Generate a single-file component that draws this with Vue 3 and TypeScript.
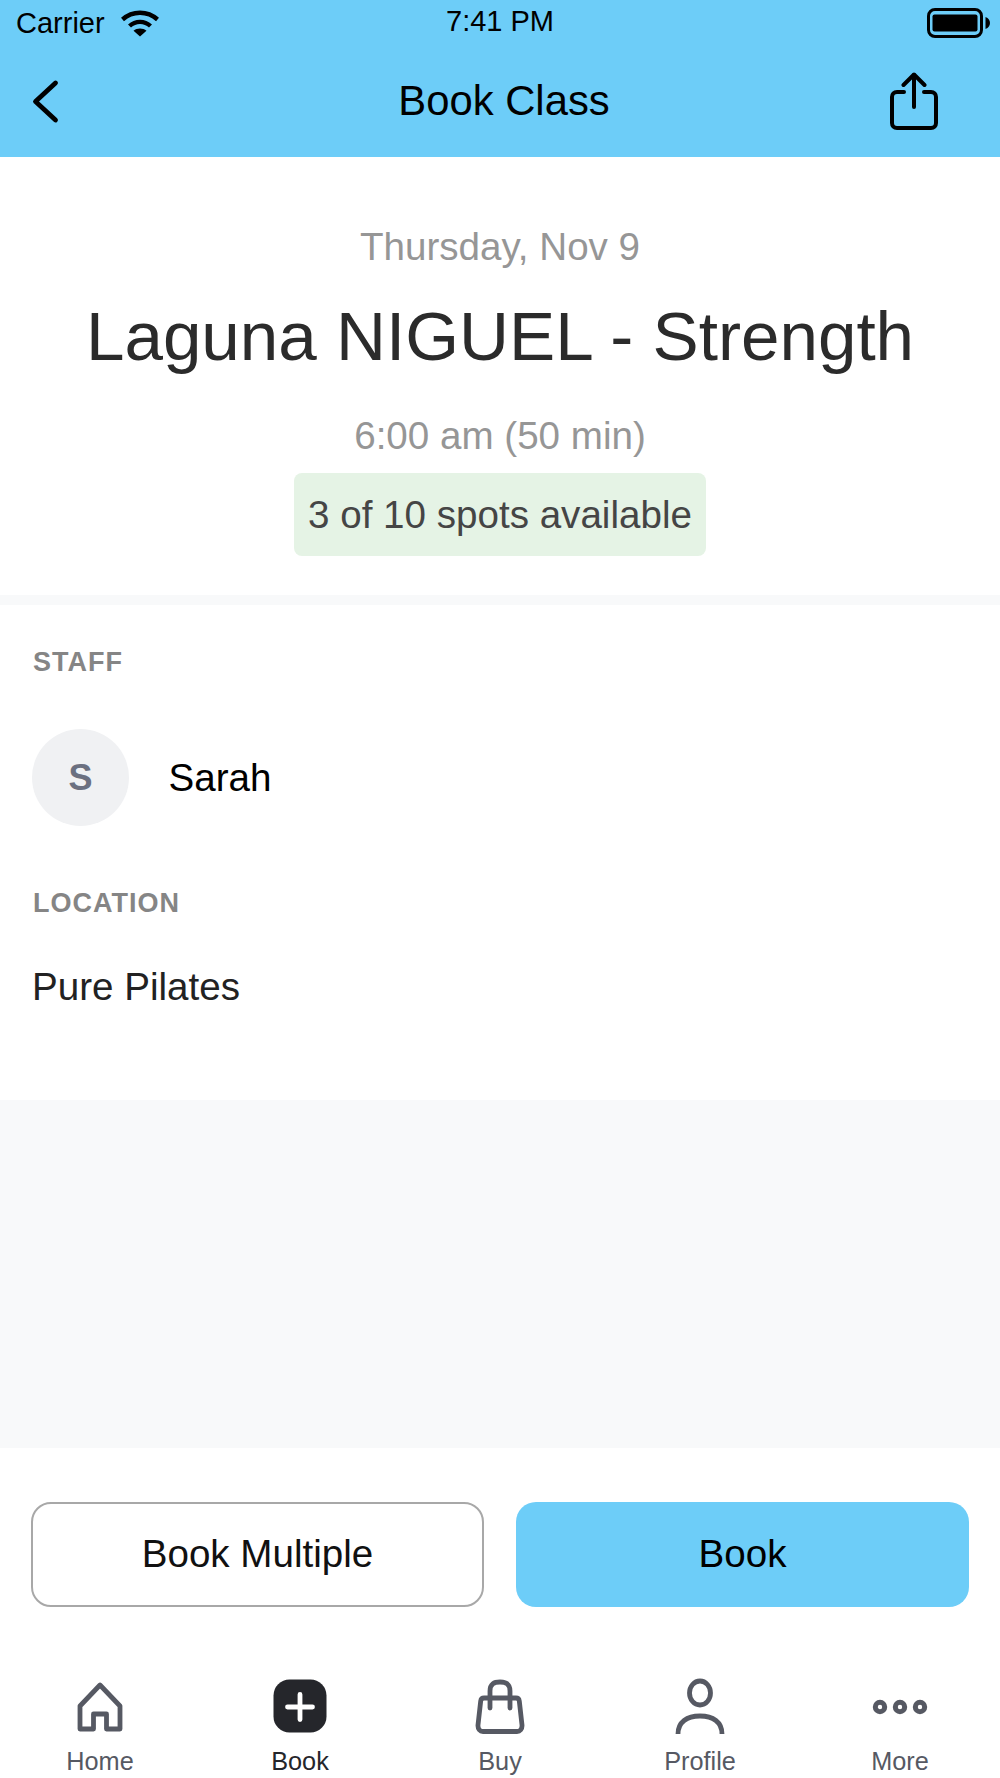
<script setup lang="ts">
const tabs = [
  { label: 'Home', icon: 'home' },
  { label: 'Book', icon: 'book', active: true },
  { label: 'Buy', icon: 'buy' },
  { label: 'Profile', icon: 'profile' },
  { label: 'More', icon: 'more' },
]
</script>

<template>
  <div class="screen">
    <header class="top">
      <div class="status">
        <div class="status-left">
          <span class="carrier">Carrier</span>
          <svg class="wifi" width="40" height="28" viewBox="0 0 40 28" fill="none" stroke="#000" stroke-width="4.4">
            <path d="M2.5 10.5C12.5 1.5 27.5 1.5 37.5 10.5" />
            <path d="M9.5 17C15.5 11.5 24.5 11.5 30.5 17" />
            <path d="M20 27.5L13.5 21.8C17 18.8 23 18.8 26.5 21.8Z" fill="#000" stroke="none" />
          </svg>
        </div>
        <span class="clock">7:41 PM</span>
        <svg class="battery" width="63" height="32" viewBox="0 0 63 32">
          <rect x="1.5" y="2.500" width="53" height="27" rx="6.500" fill="none" stroke="#000" stroke-width="3" />
          <rect x="5.500" y="7.500" width="45" height="17" rx="2" fill="#000" />
          <path d="M58.500 10C61.500 11 63 13.500 63 16C63 18.500 61.500 21 58.500 22Z" fill="#000" />
        </svg>
      </div>
      <div class="navbar">
        <svg class="back" width="32" height="48" viewBox="0 0 32 48" fill="none" stroke="#000" stroke-width="4.800" stroke-linecap="round" stroke-linejoin="round">
          <path d="M25.500 5L5.500 23.500L25.500 42" />
        </svg>
        <h1 class="nav-title">Book Class</h1>
        <svg class="share" width="50" height="60" viewBox="0 0 50 60" fill="none" stroke="#000" stroke-width="4" stroke-linecap="round" stroke-linejoin="round">
          <path d="M15 20H8C5 20 3 22 3 25V51C3 54 5 56 8 56H42C45 56 47 54 47 51V25C47 22 45 20 42 20H35" />
          <path d="M25 35V3" />
          <path d="M14.500 13L25 2.500L35.500 13" />
        </svg>
      </div>
    </header>

    <section class="summary">
      <p class="date">Thursday, Nov 9</p>
      <h2 class="class-name">Laguna NIGUEL - Strength</h2>
      <p class="time">6:00 am (50 min)</p>
      <span class="spots">3 of 10 spots available</span>
    </section>

    <section class="details">
      <h3 class="label">STAFF</h3>
      <div class="staff">
        <div class="avatar">S</div>
        <span class="staff-name">Sarah</span>
      </div>
      <h3 class="label location-label">LOCATION</h3>
      <p class="location">Pure Pilates</p>
    </section>

    <div class="spacer"></div>

    <div class="actions">
      <button class="btn outline">Book Multiple</button>
      <button class="btn primary">Book</button>
    </div>

    <nav class="tabs">
      <div v-for="tab in tabs" :key="tab.label" class="tab" :class="{ active: tab.active }">
        <svg class="tab-icon" width="56" height="56" viewBox="0 0 56 56" fill="none" stroke="#565963" stroke-width="4.800" stroke-linecap="round" stroke-linejoin="round">
          <template v-if="tab.icon === 'home'">
            <path d="M28 7L8 28V51H21.500V36H34.500V51H48V28Z" />
          </template>
          <template v-else-if="tab.icon === 'book'">
            <rect x="1.500" y="1.500" width="53" height="53" rx="16" fill="#25262b" stroke="none" />
            <path d="M28 16.500V41.500M15.500 29H40.500" stroke="#fff" />
          </template>
          <template v-else-if="tab.icon === 'buy'">
            <path d="M12 20H44C46 20 47 21 47.300 23L50 47C50.300 51 48 53.500 45 53.500H11C8 53.500 5.700 51 6 47L8.700 23C9 21 10 20 12 20Z" />
            <path d="M18 30V13C18 6 22 4 28 4C34 4 38 6 38 13V30" />
          </template>
          <template v-else-if="tab.icon === 'profile'">
            <ellipse cx="28" cy="15" rx="10.500" ry="12" />
            <path d="M6 56C6 44 15 38 28 38C41 38 50 44 50 56" stroke-linecap="butt" />
          </template>
          <template v-else>
            <circle cx="8" cy="29" r="4.700" stroke-width="5" />
            <circle cx="28" cy="29" r="4.700" stroke-width="5" />
            <circle cx="48" cy="29" r="4.700" stroke-width="5" />
          </template>
        </svg>
        <span class="tab-label">{{ tab.label }}</span>
      </div>
    </nav>
  </div>
</template>

<style scoped>
.screen {
  width: 1000px;
  height: 1778px;
  display: flex;
  flex-direction: column;
  background: #f8f9fa;
  font-family: "Liberation Sans", Arial, sans-serif;
  overflow: hidden;
}
.top {
  height: 157px;
  background: #6dcdf8;
  color: #000;
}
.status {
  height: 46px;
  position: relative;
  display: flex;
  align-items: center;
  justify-content: space-between;
  padding: 0 10px 0 16px;
}
.status-left {
  display: flex;
  align-items: center;
  gap: 15px;
}
.carrier,
.clock {
  font-size: 29px;
}
.clock {
  position: absolute;
  left: 446px;
  top: 5px;
}
.navbar {
  height: 111px;
  display: grid;
  grid-template-columns: 32px 1fr 50px;
  align-items: center;
  padding: 0 61px 0 30px;
}
.nav-title {
  margin: 0 0 2px;
  padding-left: 57px;
  text-align: center;
  font-size: 41.800px;
  font-weight: 400;
}
.summary {
  height: 438px;
  display: flex;
  flex-direction: column;
  align-items: center;
  padding-top: 68px;
  box-sizing: border-box;
  text-align: center;
  background: #fff;
}
.date,
.time {
  margin: 0;
  font-size: 38.600px;
  line-height: 44px;
  color: #969696;
}
.class-name {
  margin: 25px 0 36px;
  font-size: 69.200px;
  line-height: 84px;
  font-weight: 400;
  color: #2b2b2b;
}
.spots {
  margin-top: 15px;
  padding: 0 14px;
  height: 83px;
  line-height: 83px;
  font-size: 38.600px;
  color: #454545;
  background: #e5f3e5;
  border-radius: 8px;
}
.details {
  height: 495px;
  margin-top: 10px;
  padding: 0 32px;
  box-sizing: border-box;
  background: #fff;
}
.label {
  margin: 0 0 0 1px;
  padding-top: 44px;
  font-size: 27px;
  line-height: 26px;
  font-weight: 700;
  letter-spacing: 1px;
  color: #858585;
}
.staff {
  margin-top: 54px;
  display: flex;
  align-items: center;
  gap: 39.500px;
}
.avatar {
  width: 97px;
  height: 97px;
  border-radius: 50%;
  background: #f0f1f3;
  color: #6b7080;
  font-size: 36px;
  font-weight: 700;
  display: flex;
  align-items: center;
  justify-content: center;
}
.staff-name {
  font-size: 38.600px;
  color: #000;
}
.location-label {
  padding-top: 0;
  margin-top: 64px;
}
.location {
  margin: 49px 0 0;
  font-size: 38.600px;
  line-height: 44px;
  color: #222;
}
.spacer {
  height: 348px;
  background: #f8f9fa;
}
.actions {
  background: #fff;
  padding: 54px 31px 0;
  display: grid;
  grid-template-columns: 1fr 1fr;
  gap: 32px;
}
.btn {
  height: 105px;
  padding: 0 0 2px;
  border-radius: 20px;
  font-family: inherit;
  font-size: 38.600px;
  color: #111;
}
.outline {
  background: #fff;
  border: 2px solid #a8a8a8;
}
.primary {
  background: #6dcdf8;
  border: 0;
  color: #000;
}
.tabs {
  flex: 1;
  background: #fff;
  padding-top: 71px;
  display: grid;
  grid-template-columns: repeat(5, 200px);
}
.tab {
  display: flex;
  flex-direction: column;
  align-items: center;
}
.tab-icon {
  display: block;
}
.tab-label {
  margin-top: 13px;
  font-size: 25.300px;
  line-height: 28px;
  color: #565963;
}
.tab.active .tab-label {
  color: #25262b;
}
</style>
